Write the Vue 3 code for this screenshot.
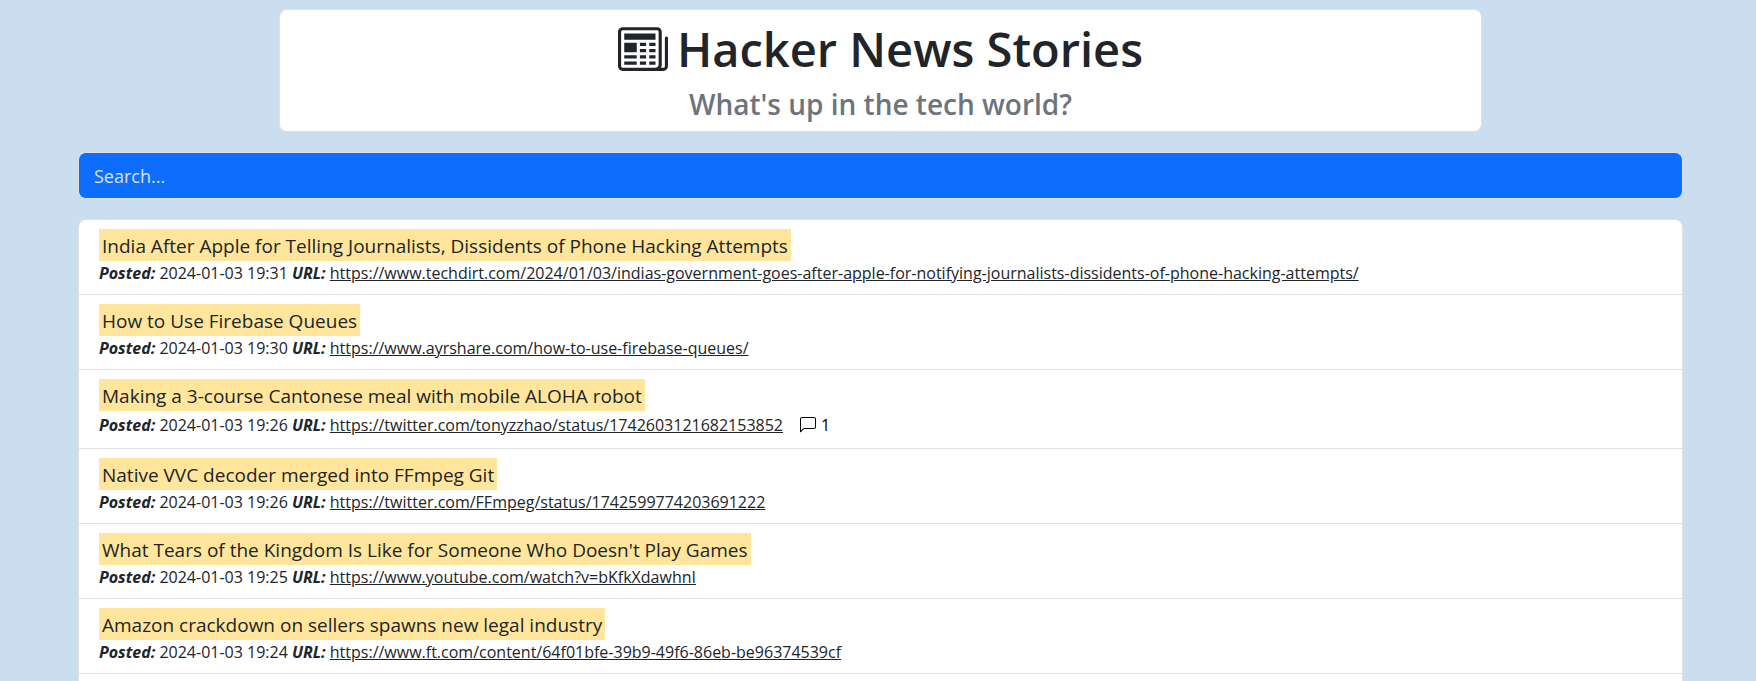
<script setup>
import { ref, computed } from 'vue'

const query = ref('')

const stories = [
  { title: 'India After Apple for Telling Journalists, Dissidents of Phone Hacking Attempts', posted: '2024-01-03 19:31', url: 'https://www.techdirt.com/2024/01/03/indias-government-goes-after-apple-for-notifying-journalists-dissidents-of-phone-hacking-attempts/', comments: 0 },
  { title: 'How to Use Firebase Queues', posted: '2024-01-03 19:30', url: 'https://www.ayrshare.com/how-to-use-firebase-queues/', comments: 0 },
  { title: 'Making a 3-course Cantonese meal with mobile ALOHA robot', posted: '2024-01-03 19:26', url: 'https://twitter.com/tonyzzhao/status/1742603121682153852', comments: 1 },
  { title: 'Native VVC decoder merged into FFmpeg Git', posted: '2024-01-03 19:26', url: 'https://twitter.com/FFmpeg/status/1742599774203691222', comments: 0 },
  { title: 'What Tears of the Kingdom Is Like for Someone Who Doesn\'t Play Games', posted: '2024-01-03 19:25', url: 'https://www.youtube.com/watch?v=bKfkXdawhnI', comments: 0 },
  { title: 'Amazon crackdown on sellers spawns new legal industry', posted: '2024-01-03 19:24', url: 'https://www.ft.com/content/64f01bfe-39b9-49f6-86eb-be96374539cf', comments: 0 },
]

const visible = computed(() =>
  stories.filter((s) => s.title.toLowerCase().includes(query.value.toLowerCase()))
)
</script>

<template>
  <main class="page">
    <header class="masthead">
      <h1 class="heading">
        <svg class="paper" viewBox="0 0 16 16" fill="currentColor" aria-hidden="true">
          <path d="M0 2.5A1.5 1.5 0 0 1 1.5 1h11A1.5 1.5 0 0 1 14 2.5v10.528c0 .3-.05.654-.238.972h.738a.5.5 0 0 0 .5-.5v-9a.5.5 0 0 1 1 0v9a1.5 1.5 0 0 1-1.5 1.5H1.497A1.497 1.497 0 0 1 0 13.5zM12 14c.37 0 .654-.211.853-.441.092-.106.147-.279.147-.531V2.5a.5.5 0 0 0-.5-.5h-11a.5.5 0 0 0-.5.5v11c0 .278.223.5.497.5z" />
          <path d="M2 3h10v2H2zm0 3h4v3H2zm0 4h4v1H2zm0 2h4v1H2zm5-6h2v1H7zm3 0h2v1h-2zM7 8h2v1H7zm3 0h2v1h-2zm-3 2h2v1H7zm3 0h2v1h-2zm-3 2h2v1H7zm3 0h2v1h-2z" />
        </svg>
        <span>Hacker News Stories</span>
      </h1>
      <p class="tagline">What's up in the tech world?</p>
    </header>

    <input v-model="query" class="search" type="text" placeholder="Search..." aria-label="Search stories" />

    <ul class="stories">
      <li v-for="story in visible" :key="story.url" class="story">
        <div class="title"><mark>{{ story.title }}</mark></div>
        <div class="meta" :class="{ discussed: story.comments }">
          <span><strong>Posted:</strong> {{ story.posted }} <strong>URL:</strong> <a :href="story.url">{{ story.url }}</a></span>
          <span v-if="story.comments" class="comments">
            <svg class="bubble" viewBox="0 0 16 16" fill="currentColor" aria-hidden="true">
              <path d="M14 1a1 1 0 0 1 1 1v8a1 1 0 0 1-1 1H4.414A2 2 0 0 0 3 11.586l-2 2V2a1 1 0 0 1 1-1zM2 0a2 2 0 0 0-2 2v12.793a.5.5 0 0 0 .854.353l2.853-2.853A1 1 0 0 1 4.414 12H14a2 2 0 0 0 2-2V2a2 2 0 0 0-2-2z" />
            </svg>
            {{ story.comments }}
          </span>
        </div>
      </li>
    </ul>
  </main>
</template>

<style>
body {
  margin: 0;
  background: #cbdeef;
}
</style>

<style scoped>
.page {
  display: flex;
  flex-direction: column;
  box-sizing: border-box;
  min-height: 100vh;
  padding: 9px 73px 0 78px;
  font-family: "Segoe UI", "Open Sans", "Noto Sans", sans-serif;
  font-variant-ligatures: none;
  color: #212529;
}

.masthead {
  box-sizing: border-box;
  width: 75%;
  margin: 0 auto 20px;
  padding: 9px 16px 8px;
  border: 1px solid #dee2e6;
  border-radius: 8px;
  background: #fff;
  text-align: center;
}

.heading {
  display: flex;
  justify-content: center;
  align-items: center;
  gap: 9px;
  margin: 0 0 7px;
  font-size: 47px;
  font-weight: 600;
  line-height: 60px;
}

.paper {
  width: 50px;
  height: 50px;
}

.tagline {
  margin: 0;
  font-size: 28px;
  font-weight: 600;
  line-height: 37px;
  color: #6c757d;
}

.search {
  display: block;
  box-sizing: border-box;
  width: 100%;
  height: 47px;
  margin: 0 0 20px;
  padding: 0 15px;
  border: 1px solid #dee2e6;
  border-radius: 8px;
  background: #0d6efd;
  color: #fff;
  font: inherit;
  font-size: 18px;
}

.search::placeholder {
  color: #dee2e6;
  opacity: 1;
}

.stories {
  flex: 1;
  margin: 0;
  padding: 0;
  border: 1px solid #dee2e6;
  border-bottom: 0;
  border-radius: 8px 8px 0 0;
  background: #fff;
  list-style: none;
}

.story {
  padding: 9px 20px;
  border-bottom: 1px solid #dee2e6;
}

.title {
  display: flex;
}

.title mark {
  padding: 2px 3px 0;
  background: #ffe69c;
  color: inherit;
  font-size: 19px;
  line-height: 30px;
}

.meta {
  display: flex;
  align-items: center;
  gap: 17px;
  font-size: 16px;
  line-height: 24px;
}

.discussed {
  line-height: 28px;
}

.meta strong {
  font-weight: 700;
  font-style: italic;
}

.meta a {
  color: inherit;
}

.comments {
  display: flex;
  align-items: center;
  gap: 5px;
  color: #000;
}

.bubble {
  width: 16px;
  height: 16px;
}
</style>
